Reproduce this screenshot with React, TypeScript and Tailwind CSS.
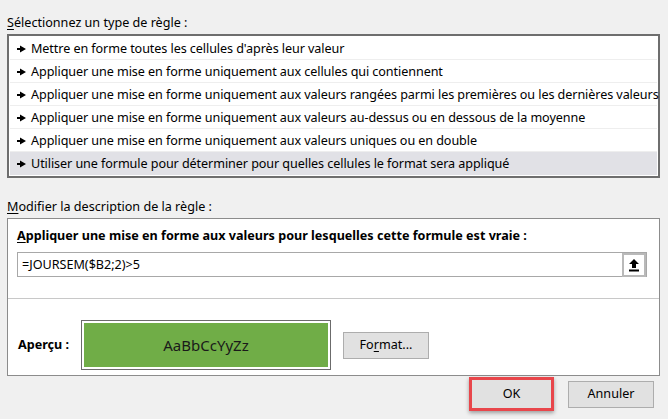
const rules = [
  "Mettre en forme toutes les cellules d'après leur valeur",
  "Appliquer une mise en forme uniquement aux cellules qui contiennent",
  "Appliquer une mise en forme uniquement aux valeurs rangées parmi les premières ou les dernières valeurs",
  "Appliquer une mise en forme uniquement aux valeurs au-dessus ou en dessous de la moyenne",
  "Appliquer une mise en forme uniquement aux valeurs uniques ou en double",
  "Utiliser une formule pour déterminer pour quelles cellules le format sera appliqué",
];

function Arrow() {
  return (
    <svg width="9" height="8" viewBox="0 0 9 8" className="shrink-0">
      <path d="M0 3h3V0.5L9 4 3 7.5V5H0z" fill="#000" />
    </svg>
  );
}

export default function App() {
  return (
    <div
      className="w-[668px] h-[419px] bg-[#f0f0f0] text-[12.6px] text-black overflow-hidden px-[7px] pt-[15px]"
      style={{ fontFamily: '"Noto Sans", "Open Sans", sans-serif' }}
    >
      <div className="h-[16px] leading-[16px]">
        <span className="underline underline-offset-2">S</span>électionnez un type de règle :
      </div>

      <div className="mt-[3px] w-[653px] h-[144px] border-2 border-[#6e6e6e] bg-white p-[1px]">
        {rules.map((r, i) => (
          <div
            key={i}
            className={`h-[23px] flex items-center gap-[5px] pl-[7px] pt-[1px] whitespace-nowrap tracking-[-0.08px] border-b ${
              i === rules.length - 1 ? "bg-[#e1e1e6] border-transparent" : "border-[#eeeeee]"
            }`}
          >
            <Arrow />
            <span className="leading-[16px]">{r}</span>
          </div>
        ))}
      </div>

      <div className="mt-[21px] h-[16px] leading-[16px]">
        <span className="underline underline-offset-2">M</span>odifier la description de la règle :
      </div>

      <div className="mt-[3px] w-[653px] h-[158px] border border-[#8c8c8c] bg-white flex flex-col">
        <div className="px-[9px] pt-[9px]">
          <div className="h-[16px] leading-[16px] font-bold">
            <span className="underline underline-offset-2">A</span>ppliquer une mise en forme aux valeurs pour lesquelles cette formule est vraie :
          </div>
          <div className="mt-[8px] w-[630px] h-[25px] border border-[#a8a8a8] flex items-center justify-between">
            <span className="pl-[4px] leading-[16px]">=JOURSEM($B2;2)&gt;5</span>
            <div className="w-[24px] h-[24px] border-2 border-[#b9b9b9] bg-white flex items-center justify-center">
              <svg width="12" height="14" viewBox="0 0 12 14">
                <path d="M6 1 1 6h3v4h4V6h3z" fill="#000" />
                <rect x="1" y="11.5" width="10" height="2" fill="#000" />
              </svg>
            </div>
          </div>
        </div>
        <div className="mt-[21px] h-px bg-[#c8c8c8]" />
        <div className="flex items-center pl-[10px] mt-[21px]">
          <div className="w-[63px] font-bold">Aperçu :</div>
          <div className="w-[250px] h-[50px] border border-[#6b6b6b] p-[2px]">
            <div className="w-full h-full bg-[#70ad47] flex items-center justify-center text-[15px] text-[#1a1a1a]">
              AaBbCcYyZz
            </div>
          </div>
          <button className="ml-[12px] w-[86px] h-[27px] bg-[#e1e1e1] border border-[#adadad] text-[12.6px]">
            Fo<span className="underline underline-offset-2">r</span>mat...
          </button>
        </div>
      </div>

      <div className="flex justify-end gap-[14px] pr-[7px] mt-[1px]">
        <div className="w-[85px] h-[34px] border-[3px] border-[#e8464b] shadow-[0_2px_4px_rgba(0,0,0,0.35)] bg-[#e1e1e1] flex items-center justify-center">
          OK
        </div>
        <div className="mt-[4px] w-[86px] h-[27px] bg-[#e1e1e1] border border-[#adadad] flex items-center justify-center">
          Annuler
        </div>
      </div>
    </div>
  );
}
